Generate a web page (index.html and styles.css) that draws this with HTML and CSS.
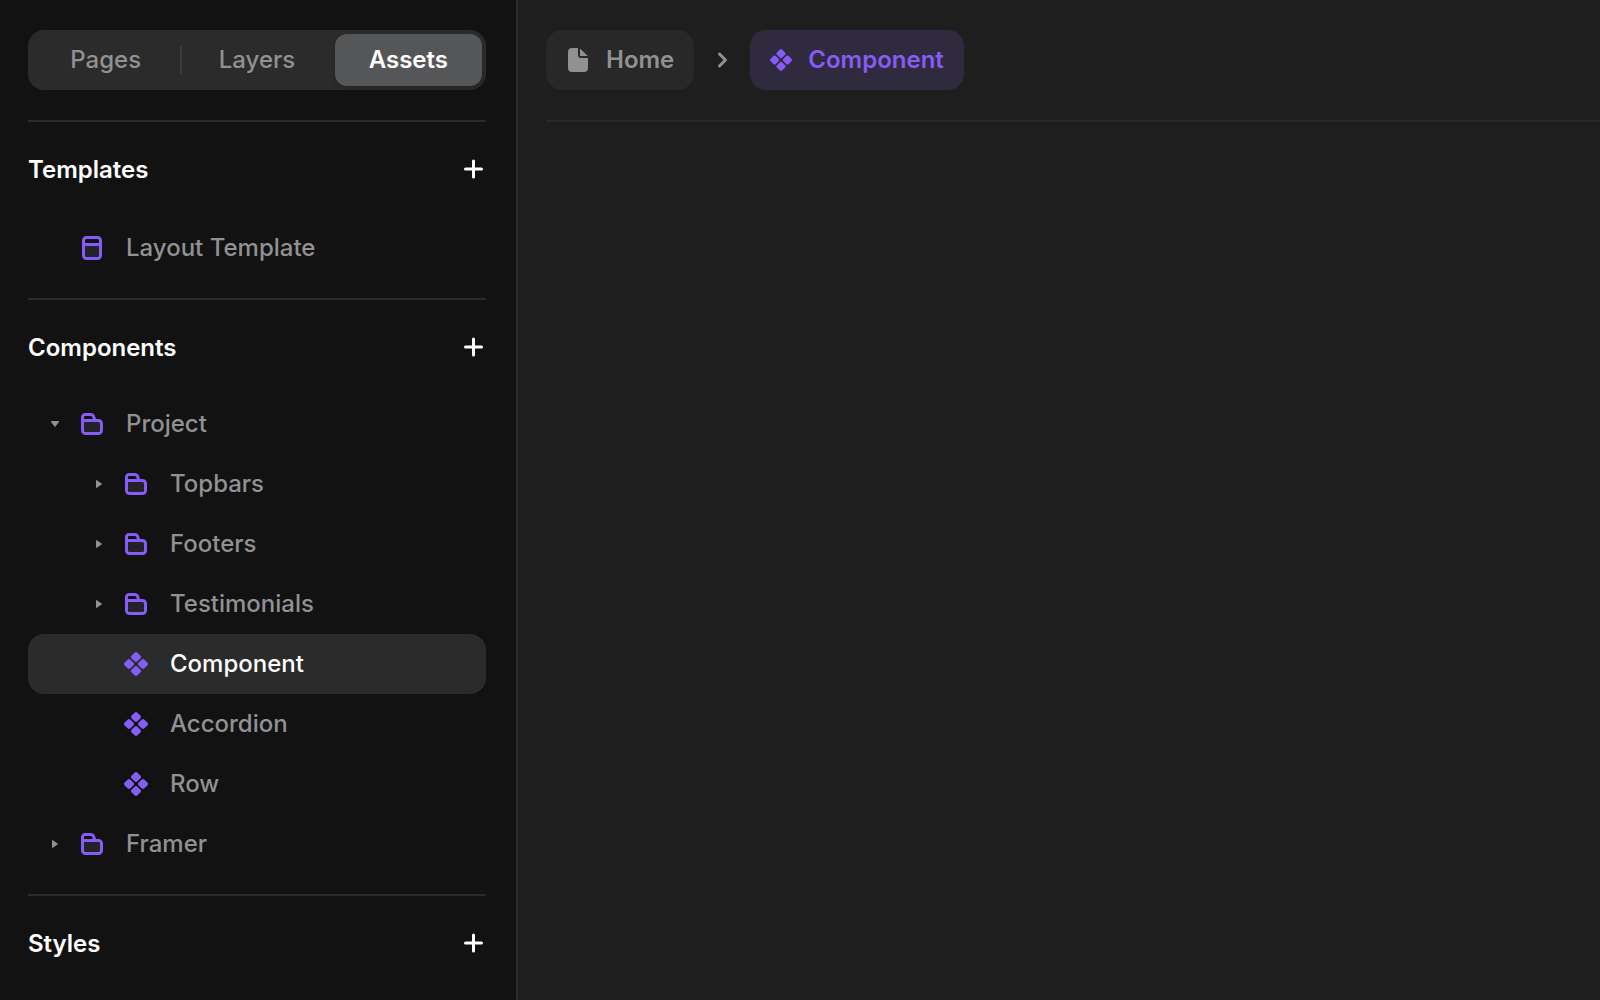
FILE: index.html
```html
<!DOCTYPE html>
<html lang="en">
<head>
<meta charset="utf-8">
<meta name="viewport" content="width=device-width, initial-scale=1">
<title>Assets</title>
<link rel="stylesheet" href="styles.css">
</head>
<body>
<svg class="sprite" aria-hidden="true">
  <symbol id="plus" viewBox="0 0 24 24">
    <path d="M11.500 3v16M3.500 11h16" fill="none" stroke="currentColor" stroke-width="3" stroke-linecap="round"/>
  </symbol>
  <symbol id="layout" viewBox="0 0 24 24">
    <path d="M5 9h14v12H5z" fill="#232129"/>
    <rect x="3.5" y="1.5" width="17" height="21" rx="3" fill="none" stroke="currentColor" stroke-width="3"/>
    <path d="M3.5 8.500h17" stroke="currentColor" stroke-width="3"/>
  </symbol>
  <symbol id="folder" viewBox="0 0 24 24">
    <path d="M3 9h18v12H3z" fill="#232129"/>
    <path d="M2.500 9V5.000a2.500 2.500 0 0 1 2.500-2.500h5.500c1.800 0 2.700.8 3.200 2.200l1.300 3.800M2.500 8.500H18.500a3 3 0 0 1 3 3v7a3 3 0 0 1-3 3h-13a3 3 0 0 1-3-3z" fill="none" stroke="currentColor" stroke-width="3"/>
  </symbol>
  <symbol id="component" viewBox="0 0 24 24">
    <g fill="currentColor" transform="rotate(45 12 12)">
      <rect x="3" y="3" width="8.100" height="8.100" rx="2"/>
      <rect x="12.900" y="3" width="8.100" height="8.100" rx="2"/>
      <rect x="3" y="12.900" width="8.100" height="8.100" rx="2"/>
      <rect x="12.900" y="12.900" width="8.100" height="8.100" rx="2"/>
    </g>
  </symbol>
  <symbol id="page" viewBox="0 0 24 24">
    <path d="M6 0h6v7a3 3 0 0 0 3 3h7V20a4 4 0 0 1-4 4H6a4 4 0 0 1-4-4V4a4 4 0 0 1 4-4z" fill="currentColor"/>
    <path d="M14 .5l7.800 7.500H14.500a.5.500 0 0 1-.5-.5z" fill="currentColor"/>
  </symbol>
  <symbol id="chevron" viewBox="0 0 24 24">
    <path d="M9.500 6l6 6-6 6" fill="none" stroke="currentColor" stroke-width="3" stroke-linecap="round" stroke-linejoin="round"/>
  </symbol>
  <symbol id="caret-right" viewBox="0 0 24 24">
    <path d="M9.500 8.500v7l5-3.500z" fill="currentColor" stroke="currentColor" stroke-linejoin="round"/>
  </symbol>
  <symbol id="caret-down" viewBox="0 0 24 24">
    <path d="M8.250 9.500h7.500L12 14.500z" fill="currentColor" stroke="currentColor" stroke-linejoin="round"/>
  </symbol>
</svg>

<div class="app">
  <aside class="sidebar">
    <div class="tabs" role="tablist">
      <button class="tab" role="tab" type="button">Pages</button>
      <span class="tab-divider"></span>
      <button class="tab" role="tab" type="button">Layers</button>
      <button class="tab tab-active" role="tab" type="button" aria-selected="true">Assets</button>
    </div>

    <section class="section">
      <header class="section-head section-head-first">
        <h2 class="section-title">Templates</h2>
        <button class="add" type="button" aria-label="Add template"><svg class="icon"><use href="#plus"/></svg></button>
      </header>
      <ul class="tree">
        <li><a class="row" href="#"><span class="caret"></span><svg class="icon accent"><use href="#layout"/></svg><span>Layout Template</span></a></li>
      </ul>
    </section>

    <section class="section">
      <header class="section-head">
        <h2 class="section-title">Components</h2>
        <button class="add" type="button" aria-label="Add component"><svg class="icon"><use href="#plus"/></svg></button>
      </header>
      <ul class="tree">
        <li>
          <a class="row" href="#"><svg class="caret"><use href="#caret-down"/></svg><svg class="icon accent"><use href="#folder"/></svg><span>Project</span></a>
          <ul class="tree">
            <li><a class="row row-child" href="#"><svg class="caret"><use href="#caret-right"/></svg><svg class="icon accent"><use href="#folder"/></svg><span>Topbars</span></a></li>
            <li><a class="row row-child" href="#"><svg class="caret"><use href="#caret-right"/></svg><svg class="icon accent"><use href="#folder"/></svg><span>Footers</span></a></li>
            <li><a class="row row-child" href="#"><svg class="caret"><use href="#caret-right"/></svg><svg class="icon accent"><use href="#folder"/></svg><span>Testimonials</span></a></li>
            <li><a class="row row-child row-selected" href="#"><span class="caret"></span><svg class="icon accent"><use href="#component"/></svg><span>Component</span></a></li>
            <li><a class="row row-child" href="#"><span class="caret"></span><svg class="icon accent"><use href="#component"/></svg><span>Accordion</span></a></li>
            <li><a class="row row-child" href="#"><span class="caret"></span><svg class="icon accent"><use href="#component"/></svg><span>Row</span></a></li>
          </ul>
        </li>
        <li><a class="row" href="#"><svg class="caret"><use href="#caret-right"/></svg><svg class="icon accent"><use href="#folder"/></svg><span>Framer</span></a></li>
      </ul>
    </section>

    <section class="section">
      <header class="section-head">
        <h2 class="section-title">Styles</h2>
        <button class="add" type="button" aria-label="Add style"><svg class="icon"><use href="#plus"/></svg></button>
      </header>
    </section>
  </aside>

  <main class="canvas">
    <nav class="crumbs" aria-label="Breadcrumb">
      <a class="crumb" href="#"><svg class="icon"><use href="#page"/></svg><span>Home</span></a>
      <svg class="icon"><use href="#chevron"/></svg>
      <a class="crumb crumb-current" href="#"><svg class="icon icon-small"><use href="#component"/></svg><span>Component</span></a>
    </nav>
  </main>
</div>
</body>
</html>
```

FILE: styles.css
```css
* {
  box-sizing: border-box;
}

body {
  margin: 0;
  background: #1e1e1e;
  color: #919193;
  font-family: Inter, "Liberation Sans", sans-serif;
  font-size: 24px;
  font-weight: 500;
  line-height: 32px;
}

.sprite {
  display: none;
}

.app {
  display: flex;
  min-height: 100vh;
}

.sidebar {
  flex: none;
  width: 518px;
  padding: 30px 30px 0 28px;
  background: #121212;
  border-right: 2px solid #2b2b2b;
}

.tabs {
  display: flex;
  align-items: center;
  height: 60px;
  margin-bottom: 30px;
  padding: 4px;
  border-radius: 16px;
  background: #2b2b2b;
}

.tab {
  flex: 1;
  height: 52px;
  padding: 0;
  border: 0;
  border-radius: 12px;
  background: none;
  color: inherit;
  font: inherit;
}

.tab-divider {
  width: 2px;
  height: 28px;
  margin: 0 1px;
  background: #3c3c42;
}

.tab-active {
  margin-left: 4px;
  background: #555658;
  box-shadow: 0 2px 4px rgba(0, 0, 0, 0.2);
  color: #fff;
  font-weight: 600;
}

.section {
  padding: 20px 0;
  border-top: 2px solid #2b2b2b;
}

.section-head {
  display: flex;
  align-items: center;
  justify-content: space-between;
  height: 56px;
  margin-bottom: 18px;
}

.section-head-first {
  margin-bottom: 20px;
}

.section-title {
  margin: 0;
  color: #fff;
  font-size: 24px;
  font-weight: 600;
}

.add {
  display: flex;
  padding: 0;
  border: 0;
  background: none;
  color: #fff;
}

.icon {
  flex: none;
  width: 24px;
  height: 24px;
}

.icon-small {
  width: 22px;
  height: 22px;
}

.accent {
  color: #855cf5;
}

.tree {
  margin: 0;
  padding: 0;
  list-style: none;
}

.row {
  display: flex;
  align-items: center;
  gap: 22px;
  height: 60px;
  padding-left: 15px;
  border-radius: 16px;
  color: inherit;
  text-decoration: none;
}

.row-child {
  padding-left: 59px;
}

.row-selected {
  background: #2b2b2b;
  color: #fff;
}

.caret {
  flex: none;
  width: 24px;
  height: 24px;
  margin-right: -9px;
}

.canvas {
  flex: 1;
  padding: 30px 0 0 28px;
}

.crumbs {
  display: flex;
  align-items: center;
  gap: 16px;
  padding-bottom: 30px;
  border-bottom: 2px solid #282828;
}

.crumb {
  display: flex;
  align-items: center;
  gap: 16px;
  height: 60px;
  padding: 0 20px;
  border-radius: 16px;
  background: #282828;
  color: inherit;
  font-weight: 600;
  text-decoration: none;
}

.crumb-current {
  background: #2f2a3d;
  color: #855cf5;
}
```
